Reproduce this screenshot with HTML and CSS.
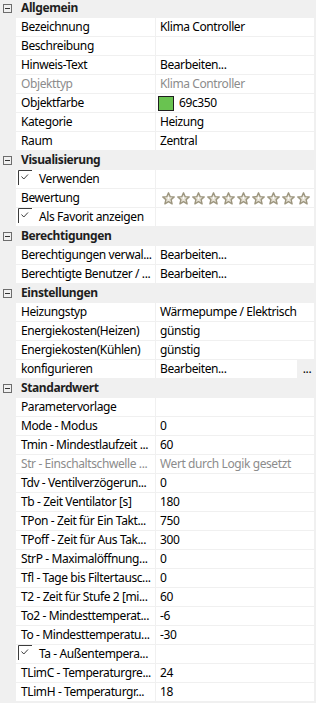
FILE: index.html
```html
<!DOCTYPE html>
<html lang="de">
<head>
    <meta charset="UTF-8">
    <meta name="viewport" content="width=device-width, initial-scale=1.0">
    <title>Eigenschaften</title>
    <link rel="stylesheet" href="styles.css">
</head>
<body>
    <svg width="0" height="0" class="defs">
        <defs>
            <symbol id="star" viewBox="0 0 13 13">
                <path d="M6.5 0.8 L8.1 4.6 L12.2 4.9 L9.1 7.6 L10.1 11.8 L6.5 9.6 L2.9 11.8 L3.9 7.6 L0.8 4.9 L4.9 4.6 Z" fill="#e6e2d6" stroke="#9d967f" stroke-width="1.4" stroke-linejoin="round"/>
                <path d="M6.5 4.2 L7.3 6.1 L6.5 7.6 L5.7 6.1 Z" fill="#fff"/>
            </symbol>
            <symbol id="check" viewBox="0 0 14 15">
                <path d="M0.5 15 V0.5 H14" fill="none" stroke="#3c3c3c" stroke-width="1"/>
                <path d="M3.5 6.5 L5.8 9 L10 4.5" fill="none" stroke="#3c3c3c" stroke-width="1"/>
            </symbol>
        </defs>
    </svg>

    <div class="grid">
        <div class="cat"><span class="toggle"></span>Allgemein</div>
        <div class="row"><div class="name">Bezeichnung</div><div class="value">Klima Controller</div></div>
        <div class="row"><div class="name">Beschreibung</div><div class="value"></div></div>
        <div class="row"><div class="name">Hinweis-Text</div><div class="value">Bearbeiten...</div></div>
        <div class="row disabled"><div class="name">Objekttyp</div><div class="value">Klima Controller</div></div>
        <div class="row"><div class="name">Objektfarbe</div><div class="value"><span class="swatch"></span>69c350</div></div>
        <div class="row"><div class="name">Kategorie</div><div class="value">Heizung</div></div>
        <div class="row"><div class="name">Raum</div><div class="value">Zentral</div></div>

        <div class="cat"><span class="toggle"></span>Visualisierung</div>
        <div class="row"><div class="name checked"><svg class="checkbox"><use href="#check"/></svg>Verwenden</div><div class="value"></div></div>
        <div class="row"><div class="name">Bewertung</div><div class="value stars">
            <svg class="star"><use href="#star"/></svg><svg class="star"><use href="#star"/></svg><svg class="star"><use href="#star"/></svg><svg class="star"><use href="#star"/></svg><svg class="star"><use href="#star"/></svg><svg class="star"><use href="#star"/></svg><svg class="star"><use href="#star"/></svg><svg class="star"><use href="#star"/></svg><svg class="star"><use href="#star"/></svg><svg class="star"><use href="#star"/></svg>
        </div></div>
        <div class="row"><div class="name checked"><svg class="checkbox"><use href="#check"/></svg>Als Favorit anzeigen</div><div class="value"></div></div>

        <div class="cat"><span class="toggle"></span>Berechtigungen</div>
        <div class="row"><div class="name">Berechtigungen verwal...</div><div class="value">Bearbeiten...</div></div>
        <div class="row"><div class="name">Berechtigte Benutzer / ...</div><div class="value">Bearbeiten...</div></div>

        <div class="cat"><span class="toggle"></span>Einstellungen</div>
        <div class="row"><div class="name">Heizungstyp</div><div class="value">Wärmepumpe / Elektrisch</div></div>
        <div class="row"><div class="name">Energiekosten(Heizen)</div><div class="value">günstig</div></div>
        <div class="row"><div class="name">Energiekosten(Kühlen)</div><div class="value">günstig</div></div>
        <div class="row"><div class="name">konfigurieren</div><div class="value">Bearbeiten...</div><div class="more">...</div></div>

        <div class="cat"><span class="toggle"></span>Standardwert</div>
        <div class="row"><div class="name">Parametervorlage</div><div class="value"></div></div>
        <div class="row"><div class="name">Mode - Modus</div><div class="value">0</div></div>
        <div class="row"><div class="name">Tmin - Mindestlaufzeit ...</div><div class="value">60</div></div>
        <div class="row disabled"><div class="name">Str - Einschaltschwelle ...</div><div class="value">Wert durch Logik gesetzt</div></div>
        <div class="row"><div class="name">Tdv - Ventilverzögerun...</div><div class="value">0</div></div>
        <div class="row"><div class="name">Tb - Zeit Ventilator [s]</div><div class="value">180</div></div>
        <div class="row"><div class="name">TPon - Zeit für Ein Takt...</div><div class="value">750</div></div>
        <div class="row"><div class="name">TPoff - Zeit für Aus Tak...</div><div class="value">300</div></div>
        <div class="row"><div class="name">StrP - Maximalöffnung...</div><div class="value">0</div></div>
        <div class="row"><div class="name">Tfl - Tage bis Filtertausc...</div><div class="value">0</div></div>
        <div class="row"><div class="name">T2 - Zeit für Stufe 2 [mi...</div><div class="value">60</div></div>
        <div class="row"><div class="name">To2 - Mindesttemperat...</div><div class="value">-6</div></div>
        <div class="row"><div class="name">To - Mindesttemperatu...</div><div class="value">-30</div></div>
        <div class="row"><div class="name checked"><svg class="checkbox"><use href="#check"/></svg>Ta - Außentempera...</div><div class="value"></div></div>
        <div class="row"><div class="name">TLimC - Temperaturgre...</div><div class="value">24</div></div>
        <div class="row"><div class="name">TLimH - Temperaturgr...</div><div class="value">18</div></div>
    </div>
</body>
</html>
```

FILE: styles.css
```css
* {
    box-sizing: border-box;
    margin: 0;
    padding: 0;
}

body {
    background: #f0f0f0;
    font-family: 'Noto Sans', 'Open Sans', sans-serif;
    font-size: 12px;
    letter-spacing: -0.4px;
    color: #000;
    overflow: hidden;
}

.defs {
    position: absolute;
}

.grid {
    margin-top: -1px;
    padding-right: 2px;
    display: flex;
    flex-direction: column;
    gap: 1px;
}

.cat,
.row {
    height: 18px;
    line-height: 18px;
    display: flex;
    white-space: nowrap;
}

/* category header */
.cat {
    padding-left: 21px;
    position: relative;
    font-weight: 700;
    color: #1e1e1e;
}

.toggle {
    position: absolute;
    left: 3px;
    top: 5px;
    width: 9px;
    height: 9px;
    border: 1px solid #6d6d6d;
}

.toggle::after {
    content: '';
    position: absolute;
    left: 1px;
    top: 3px;
    width: 5px;
    height: 1px;
    background: #333;
}

/* property rows */
.row {
    padding-left: 16px;
    gap: 1px;
}

.name,
.value {
    background: #fff;
    overflow: hidden;
}

.name {
    width: 139px;
    flex-shrink: 0;
    padding-left: 5px;
}

.value {
    flex: 1;
    padding-left: 4px;
    display: flex;
    align-items: center;
}

.disabled {
    color: #8c8c8c;
}

.checked {
    display: flex;
    align-items: flex-start;
    padding-left: 2px;
}

.checkbox {
    width: 14px;
    height: 15px;
    margin-right: 7px;
    flex-shrink: 0;
}

.swatch {
    width: 16px;
    height: 15px;
    background: #69c350;
    border: 1px solid #1f1f1f;
    margin-right: 5px;
    margin-left: -2px;
}

.stars {
    padding-left: 6px;
    gap: 2px;
}

.star {
    width: 13px;
    height: 13px;
    flex-shrink: 0;
}

.more {
    width: 16px;
    text-align: center;
    padding-left: 2px;
}
```
